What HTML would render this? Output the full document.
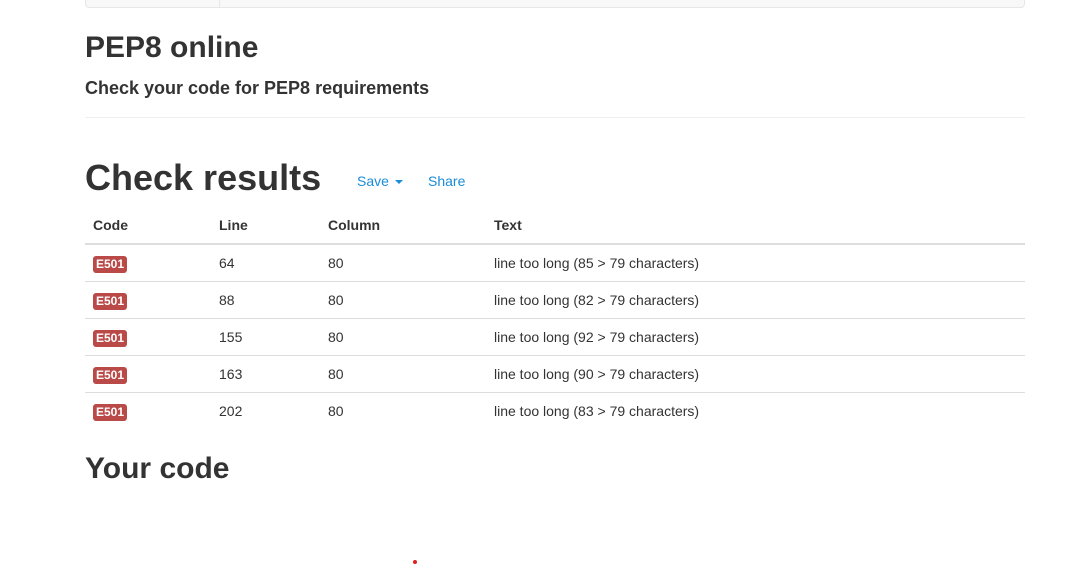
<!DOCTYPE html>
<html><head><style>
body{margin:0;background:#fff;font-family:"Liberation Sans",Arial,sans-serif;color:#333;font-size:14px;width:1068px;height:567px;overflow:hidden;position:relative}
.nav{position:absolute;left:85px;top:-10px;width:938px;height:16px;background:#f8f8f8;border:1px solid #e7e7e7;border-radius:4px}
.nav i{position:absolute;left:133px;top:0;height:17px;border-left:1px solid #e7e7e7}
.a{position:absolute;left:85px;margin:0;white-space:nowrap}
h1.a{font-size:30px;font-weight:bold;top:30px;line-height:36px}
.sub{font-size:18px;font-weight:bold;top:77px;line-height:22px}
.hr{position:absolute;left:85px;width:940px;top:117px;border-top:1px solid #eee}
.cr{font-size:36px;font-weight:bold;top:156px;line-height:44px}
.lnk{position:absolute;top:173px;color:#1a8cd8;font-size:14px}
.caret{display:inline-block;border-top:4px solid #1a8cd8;border-left:4px solid transparent;border-right:4px solid transparent;vertical-align:middle;margin-left:6px}
table{position:absolute;left:85px;top:207px;width:940px;border-collapse:collapse}
td,th{padding:0 8px;height:36px;text-align:left;border-bottom:1px solid #ddd;font-size:14px}
th{height:36px;border-bottom:2px solid #ddd;font-weight:bold}
.b{background:#b94a48;color:#fff;font-weight:bold;font-size:12px;padding:1px 3px 2px;border-radius:3px}
.yc{font-size:30px;font-weight:bold;top:451px;line-height:36px}
</style></head><body>
<div class="nav"><i></i></div>
<h1 class="a">PEP8 online</h1>
<div class="a sub">Check your code for PEP8 requirements</div>
<div class="hr"></div>
<div class="a cr">Check results</div>
<span class="lnk" style="left:357px">Save<span class="caret"></span></span>
<span class="lnk" style="left:428px">Share</span>
<table>
<tr><th style="width:110px">Code</th><th style="width:93px">Line</th><th style="width:150px">Column</th><th>Text</th></tr>
<tr><td><span class="b">E501</span></td><td>64</td><td>80</td><td>line too long (85 &gt; 79 characters)</td></tr>
<tr><td><span class="b">E501</span></td><td>88</td><td>80</td><td>line too long (82 &gt; 79 characters)</td></tr>
<tr><td><span class="b">E501</span></td><td>155</td><td>80</td><td>line too long (92 &gt; 79 characters)</td></tr>
<tr><td><span class="b">E501</span></td><td>163</td><td>80</td><td>line too long (90 &gt; 79 characters)</td></tr>
<tr><td style="border:0"><span class="b">E501</span></td><td style="border:0">202</td><td style="border:0">80</td><td style="border:0">line too long (83 &gt; 79 characters)</td></tr>
</table>
<div class="a yc">Your code</div>
<div style="position:absolute;left:413px;top:560px;width:4px;height:4px;border-radius:2px;background:#e02020"></div>
</body></html>
